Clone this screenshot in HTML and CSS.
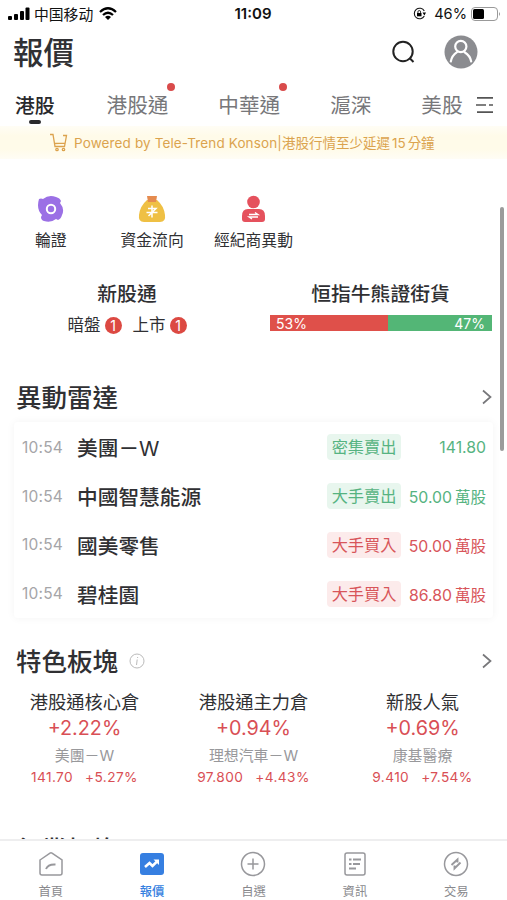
FILE: index.html
```html
<!DOCTYPE html>
<html lang="zh-Hant">
<head>
    <meta charset="UTF-8">
    <meta name="viewport" content="width=device-width, initial-scale=1.0">
    <title>報價</title>
    <link rel="stylesheet" href="styles.css">
</head>
<body>
    <div class="app">
        <div class="status-bar">
            <div class="status-left">
                <svg width="22" height="14" viewBox="0 0 22 14">
                    <rect x="0" y="9" width="4" height="4" rx="1"/>
                    <rect x="6" y="7" width="4" height="6" rx="1"/>
                    <rect x="12" y="4" width="4" height="9" rx="1"/>
                    <rect x="17.500" y="0.500" width="4" height="12.500" rx="1"/>
                </svg>
                <span class="carrier">中国移动</span>
                <svg class="wifi" width="18" height="14" viewBox="0 0 18 14">
                    <path d="M1 5Q9-2.400 17 5M4 8Q9 3.400 14 8" fill="none" stroke="#000" stroke-width="2.300"/>
                    <path d="M6 10Q9 7.300 12 10L9 13Z"/>
                </svg>
            </div>
            <div class="clock">11:09</div>
            <div class="status-right">
                <svg width="13" height="13" viewBox="0 0 13 13">
                    <path d="M11.300 4A5.300 5.300 0 1 0 11.300 9" fill="none" stroke="#111" stroke-width="1.100"/>
                    <path d="M9.500 5.500H13L11.400 8.500Z"/>
                    <rect x="4" y="6" width="4.500" height="3.300"/>
                    <path d="M4.900 6V4.900a1.300 1.300 0 0 1 2.700 0V6" fill="none" stroke="#111" stroke-width=".9"/>
                </svg>
                <span class="percent">46%</span>
                <svg width="30" height="14" viewBox="0 0 30 14">
                    <rect x=".5" y=".5" width="26" height="13" rx="3.500" fill="#fff" stroke="#999"/>
                    <rect x="2" y="2" width="11" height="10" rx="1.500"/>
                    <path d="M28 5Q30 7 28 9Z" fill="#999"/>
                </svg>
            </div>
        </div>

        <header class="header">
            <h1>報價</h1>
            <div class="header-icons">
                <svg width="24" height="24" viewBox="0 0 24 24" fill="none" stroke="#222" stroke-width="2">
                    <circle cx="12" cy="11.500" r="9.700"/>
                    <path d="M18.500 18L22.500 22"/>
                </svg>
                <svg width="34" height="34" viewBox="0 0 34 34">
                    <circle cx="17" cy="17" r="16.500" fill="#8b8c90"/>
                    <g fill="none" stroke="#fff" stroke-width="2.200" stroke-linecap="round">
                        <circle cx="16.800" cy="11.500" r="5.600"/>
                        <path d="M6.800 26.500C7.500 22.500 9.500 19.500 13 17.200M20.600 17.200C24.500 19.500 26.500 22.500 27.200 26.500"/>
                    </g>
                </svg>
            </div>
        </header>

        <nav class="tabs">
            <div class="tab active">港股</div>
            <div class="tab">港股通<i class="dot"></i></div>
            <div class="tab">中華通<i class="dot"></i></div>
            <div class="tab">滬深</div>
            <div class="tab">美股</div>
            <svg class="tab-menu" width="18" height="18" viewBox="0 0 18 18" stroke="#555" stroke-width="1.700">
                <path d="M1 1.800H17M0 9H10M13 9H17M1 16.200H17"/>
            </svg>
        </nav>

        <div class="notice">
            <svg width="18" height="19" viewBox="0 0 18 19" fill="none" stroke="#dca24d" stroke-width="1.300">
                <path d="M0 1.500H3L5 13.500H14.500L16.500 2.500H13M4 10.500L15 10.200"/>
                <circle cx="7" cy="16.500" r="1.200"/>
                <circle cx="13.500" cy="16.500" r="1.200"/>
            </svg>
            <span class="notice-en">Powered by Tele-Trend Konson|</span><span class="notice-zh">港股行情至少延遲<span class="minutes">15</span>分鐘</span>
        </div>

        <main class="content">
            <div class="shortcuts">
                <div class="shortcut">
                    <svg width="28" height="28" viewBox="0 0 28 28">
                        <path d="M2 4Q4 3 6 4Q12-1 19 2Q23 3 24 6L23 8Q28 14 25 20Q24 24 21 25L19 24Q14 28 7 26Q4 25 4 22L5 20Q-1 14 2 4Z" fill="#9b70e5"/>
                        <circle cx="14" cy="14" r="4.200" fill="none" stroke="#fff" stroke-width="2"/>
                    </svg>
                    <span>輪證</span>
                </div>
                <div class="shortcut">
                    <svg width="28" height="28" viewBox="0 0 28 28">
                        <path d="M9 5H19Q26 11 27 20Q28 27 22 27H6Q0 27 1 20Q2 11 9 5Z" fill="#efc044"/>
                        <path d="M9 1H19L18 7H10Z" fill="#e58b4f"/>
                        <path d="M14 10.500V22.500M10 13.500H18L15 16.500M8.500 17.500H19.500M10.500 21L13.500 18" fill="none" stroke="#fff" stroke-width="1.500"/>
                    </svg>
                    <span>資金流向</span>
                </div>
                <div class="shortcut">
                    <svg width="28" height="28" viewBox="0 0 28 28">
                        <circle cx="14.500" cy="7" r="6.300" fill="#e5515d"/>
                        <path d="M3 21Q3 14 9 14H20Q26 14 26 21V24Q26 27 23 27H6Q3 27 3 24Z" fill="#e5515d"/>
                        <path d="M10 19.500H19L16 17.500M19 22H10L13 24" fill="none" stroke="#fff" stroke-width="1.300"/>
                    </svg>
                    <span>經紀商異動</span>
                </div>
            </div>

            <div class="summary">
                <div class="summary-col">
                    <h3>新股通</h3>
                    <div class="ipo-line">
                        <span>暗盤</span><b class="badge">1</b>
                        <span class="listing">上市</span><b class="badge">1</b>
                    </div>
                </div>
                <div class="summary-col bull-bear">
                    <h3>恒指牛熊證街貨</h3>
                    <div class="ratio">
                        <div class="bull" style="width: 53%">53%</div>
                        <div class="bear" style="width: 47%">47%</div>
                    </div>
                </div>
            </div>

            <div class="section-title radar-title">
                <h2>異動雷達</h2>
                <svg class="arrow" width="10" height="16" viewBox="0 0 10 16"><path d="M1 1.500L8.500 8L1 14.500"/></svg>
            </div>
            <div class="radar">
                <div class="radar-row down">
                    <span class="time">10:54</span><span class="name">美團－<span class="latin">W</span></span>
                    <span class="tag">密集賣出</span><span class="amount">141.80</span>
                </div>
                <div class="radar-row down">
                    <span class="time">10:54</span><span class="name">中國智慧能源</span>
                    <span class="tag">大手賣出</span><span class="amount">50.00<small>萬股</small></span>
                </div>
                <div class="radar-row up">
                    <span class="time">10:54</span><span class="name">國美零售</span>
                    <span class="tag">大手買入</span><span class="amount">50.00<small>萬股</small></span>
                </div>
                <div class="radar-row up">
                    <span class="time">10:54</span><span class="name">碧桂園</span>
                    <span class="tag">大手買入</span><span class="amount">86.80<small>萬股</small></span>
                </div>
            </div>

            <div class="section-title sector-title">
                <h2>特色板塊</h2>
                <svg class="info" width="16" height="16" viewBox="0 0 16 16" fill="none" stroke="#bbb">
                    <circle cx="8" cy="8" r="7"/>
                    <path d="M8.700 4L8.500 5M8.200 6.500L7.500 12"/>
                </svg>
                <svg class="arrow" width="10" height="16" viewBox="0 0 10 16"><path d="M1 1.500L8.500 8L1 14.500"/></svg>
            </div>
            <div class="sectors">
                <div class="sector">
                    <div class="sector-name">港股通核心倉</div>
                    <div class="change">+2.22%</div>
                    <div class="stock">美團－W</div>
                    <div class="quote"><span>141.70</span><span>+5.27%</span></div>
                </div>
                <div class="sector">
                    <div class="sector-name">港股通主力倉</div>
                    <div class="change">+0.94%</div>
                    <div class="stock">理想汽車－W</div>
                    <div class="quote"><span>97.800</span><span>+4.43%</span></div>
                </div>
                <div class="sector">
                    <div class="sector-name">新股人氣</div>
                    <div class="change">+0.69%</div>
                    <div class="stock">康基醫療</div>
                    <div class="quote"><span>9.410</span><span>+7.54%</span></div>
                </div>
            </div>

            <div class="section-title industry-title">
                <h2>行業板塊</h2>
            </div>
            <div class="scrollbar"></div>
        </main>

        <nav class="bottom-nav">
            <div class="nav-item">
                <svg width="26" height="26" viewBox="0 0 26 26">
                    <path d="M2 9L12 2.200Q13 1.500 14 2.200L24 9V22Q24 24 22 24H4Q2 24 2 22Z"/>
                    <path class="bold" d="M8 18Q10 13 17.500 13.500"/>
                </svg>
                <span>首頁</span>
            </div>
            <div class="nav-item active">
                <svg width="26" height="26" viewBox="0 0 26 26">
                    <rect class="solid" x="1" y="2" width="24" height="22" rx="3"/>
                    <path class="trend" d="M6 16L10.500 12L13.500 15L18.500 10"/>
                    <path class="trend-tip" d="M14.500 8.500H20V14Z"/>
                </svg>
                <span>報價</span>
            </div>
            <div class="nav-item">
                <svg width="26" height="26" viewBox="0 0 26 26">
                    <circle cx="13" cy="13" r="11.500"/>
                    <path d="M7.500 13H18.500M13 7.500V18.500"/>
                </svg>
                <span>自選</span>
            </div>
            <div class="nav-item">
                <svg width="26" height="26" viewBox="0 0 26 26">
                    <rect x="3" y="2" width="20" height="22" rx="2"/>
                    <path class="bold" d="M7 8.500H9.500M11 8.500H19M7 13H9.500M11 13H18M7 17.500H14"/>
                </svg>
                <span>資訊</span>
            </div>
            <div class="nav-item">
                <svg width="26" height="26" viewBox="0 0 26 26">
                    <circle cx="13" cy="13" r="11.500"/>
                    <path class="bold" d="M8.500 14L14.500 8.500V11.500M17.500 11.500L11.500 17.500V14.500"/>
                </svg>
                <span>交易</span>
            </div>
        </nav>
    </div>
</body>
</html>
```
FILE: styles.css
```css
* {
    box-sizing: border-box;
}

body {
    margin: 0;
    background-color: #fff;
    color: #303033;
    font-family: Inter, "Noto Sans CJK TC", sans-serif;
}

h1, h2, h3 {
    margin: 0;
    font-weight: 500;
}

svg {
    display: block;
    flex-shrink: 0;
}

.app {
    display: flex;
    flex-direction: column;
    width: 507px;
    height: 900px;
    overflow: hidden;
}

.status-bar {
    display: grid;
    grid-template-columns: 1fr auto 1fr;
    align-items: center;
    height: 27px;
    padding: 0 6px 0 8px;
    color: #111;
}

.status-left, .status-right {
    display: flex;
    align-items: center;
    gap: 4px;
}

.status-right {
    justify-content: flex-end;
}

.carrier {
    font-family: "Noto Sans CJK SC", sans-serif;
    font-size: 14.8px;
    line-height: 20px;
}

.wifi {
    margin-left: 2px;
}

.clock {
    margin-right: 3px;
    font-size: 15px;
    font-weight: 600;
}

.percent {
    margin-left: 4px;
    font-size: 14.6px;
}

.header {
    display: flex;
    align-items: center;
    justify-content: space-between;
    height: 50px;
    padding: 0 29px 0 13px;
}

h1 {
    padding-top: 2px;
    font-size: 30.5px;
    line-height: 50px;
}

.header-icons {
    display: flex;
    align-items: center;
    gap: 29px;
}

.tabs {
    display: flex;
    height: 49px;
    padding: 14px 12px 0 15px;
    font-size: 20.6px;
    line-height: 30px;
    color: #77777a;
}

.tab {
    position: relative;
    margin-right: 50px;
    white-space: nowrap;
}

.tab.active {
    margin-right: 52px;
    font-size: 19.8px;
    font-weight: 500;
    color: #29292c;
}

.tab.active::after {
    content: '';
    position: absolute;
    left: 14px;
    bottom: 2px;
    width: 12px;
    height: 4px;
    border-radius: 2px;
    background-color: #29292c;
}

.tab:nth-child(5) {
    margin-right: 13px;
}

.dot {
    position: absolute;
    top: -8px;
    right: -7px;
    width: 8px;
    height: 8px;
    border-radius: 50%;
    background-color: #d94b4b;
}

.tab-menu {
    margin-top: 5px;
}

.notice {
    display: flex;
    align-items: center;
    height: 33px;
    padding-left: 50px;
    background: linear-gradient(#fffdf5, #fffbe9 30%, #fffbe9 70%, #fffdf5);
    color: #dba34e;
    font-size: 13.5px;
    line-height: 20px;
    white-space: nowrap;
}

.notice svg {
    margin-right: 6px;
}

.notice-en {
    letter-spacing: 0.13px;
}

.minutes {
    margin: 0 2px;
}

.content {
    position: relative;
    flex: 1;
    min-height: 0;
    overflow: hidden;
}

.shortcuts {
    display: flex;
    height: 111px;
    padding-top: 36px;
}

.shortcut {
    display: flex;
    flex-direction: column;
    align-items: center;
    width: 101.4px;
    font-size: 15.8px;
    line-height: 23px;
    white-space: nowrap;
}

.shortcut span {
    margin-top: 6px;
}

.summary {
    display: grid;
    grid-template-columns: 254px 253px;
    height: 102px;
    padding-top: 10px;
    text-align: center;
}

h3 {
    font-size: 19.8px;
    line-height: 28px;
}

.ipo-line {
    display: flex;
    align-items: center;
    justify-content: center;
    margin-top: 5px;
    font-size: 16.5px;
    line-height: 24px;
}

.badge {
    width: 17px;
    height: 17px;
    margin-left: 4px;
    border-radius: 50%;
    background-color: #dc4942;
    color: #fff;
    font-size: 14px;
    font-weight: 400;
    line-height: 17px;
}

.listing {
    margin-left: 11px;
}

.ratio {
    display: flex;
    width: 222px;
    height: 16px;
    margin: 7px 0 0 16px;
    color: #fff;
    font-size: 14px;
    line-height: 17px;
}

.bull {
    padding-left: 6px;
    background-color: #df504a;
    text-align: left;
}

.bear {
    padding-right: 7px;
    background-color: #53b676;
    text-align: right;
}

.section-title {
    display: flex;
    align-items: center;
    padding: 0 15px 0 16px;
}

h2 {
    padding-top: 2px;
    font-size: 25.5px;
    line-height: 38px;
}

.arrow {
    margin-left: auto;
    fill: none;
    stroke: #77777a;
    stroke-width: 1.7;
}

.radar-title {
    height: 50px;
}

.radar {
    height: 196px;
    margin: 0 14px;
    padding-top: 1px;
    border-radius: 4px;
    box-shadow: 0 0 8px rgba(0, 0, 0, 0.05);
}

.radar-row {
    display: flex;
    align-items: center;
    height: 48.8px;
    padding: 0 7px 0 8px;
    white-space: nowrap;
}

.time {
    width: 55px;
    color: #a5a5a8;
    font-size: 15.5px;
    letter-spacing: 0.2px;
}

.name {
    flex: 1;
    font-size: 20.7px;
    font-weight: 500;
}

.latin {
    font-weight: 400;
}

.tag {
    width: 74px;
    height: 26px;
    border-radius: 4px;
    font-size: 16.2px;
    line-height: 26px;
    text-align: center;
}

.amount {
    width: 85px;
    font-size: 15.8px;
    text-align: right;
}

.amount small {
    margin-left: 3px;
    font-size: 15.5px;
}

.down .tag, .down .amount {
    color: #56b381;
}

.down .tag {
    background-color: #e8f6ee;
}

.up .tag, .up .amount {
    color: #d8555a;
}

.up .tag {
    background-color: #fcebeb;
}

.sector-title {
    height: 50px;
    margin-top: 18px;
}

.info {
    margin-left: 11px;
}

.sectors {
    display: grid;
    grid-template-columns: repeat(3, 169px);
    height: 130px;
    padding-top: 3px;
    text-align: center;
    white-space: nowrap;
}

.sector-name {
    font-size: 18.3px;
    line-height: 27px;
}

.change {
    color: #d94f55;
    font-size: 19.8px;
    line-height: 24px;
}

.stock {
    margin-top: 5px;
    color: #98989b;
    font-size: 14.9px;
    line-height: 22px;
}

.quote {
    display: flex;
    justify-content: center;
    gap: 12px;
    color: #d94f55;
    font-size: 13.7px;
    line-height: 21px;
    letter-spacing: 0.4px;
}

.industry-title {
    margin-top: 13px;
}

.scrollbar {
    position: absolute;
    top: 48px;
    right: 3px;
    width: 4px;
    height: 244px;
    border-radius: 2px;
    background-color: #9b9b9b;
}

.bottom-nav {
    display: grid;
    grid-template-columns: repeat(5, 1fr);
    height: 61px;
    border-top: 2px solid #eeeeef;
    background-color: #fff;
}

.nav-item {
    display: flex;
    flex-direction: column;
    align-items: center;
    padding-top: 10px;
    color: #89898d;
    font-size: 12.3px;
    line-height: 18px;
}

.nav-item svg {
    fill: none;
    stroke: #98989c;
    stroke-width: 1.5;
}

.nav-item .bold {
    stroke-width: 1.9;
}

.nav-item span {
    margin-top: 6px;
}

.nav-item.active {
    color: #367fdf;
    font-weight: 500;
}

.nav-item .solid {
    fill: #367fe1;
    stroke: none;
}

.nav-item .trend {
    stroke: #fff;
    stroke-width: 2.5;
}

.nav-item .trend-tip {
    fill: #fff;
    stroke: none;
}
```
